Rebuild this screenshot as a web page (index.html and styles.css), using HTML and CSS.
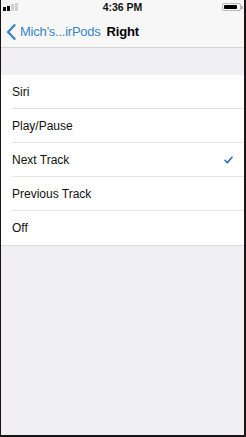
FILE: index.html
```html
<!DOCTYPE html>
<html>
<head>
<meta charset="utf-8">
<link rel="stylesheet" href="styles.css">
</head>
<body>
<div class="screen">
  <div class="status">
    <div class="signal">
      <span class="bar b1 on"></span><span class="bar b2 on"></span><span class="bar b3"></span><span class="bar b4"></span>
    </div>
    <div class="time">4:36 PM</div>
    <div class="battery"><span class="fill"></span><span class="nub"></span></div>
  </div>
  <div class="nav">
    <svg class="chev" width="10" height="16" viewBox="0 0 10 16"><path d="M8.5 1.2 L2 8 L8.5 14.8" fill="none" stroke="#3a86c4" stroke-width="2.3" stroke-linecap="round" stroke-linejoin="round"/></svg>
    <span class="back">Mich’s...irPods</span>
    <span class="title">Right</span>
  </div>
  <div class="gap"></div>
  <ul class="list">
    <li class="row"><span>Siri</span></li>
    <li class="row"><span>Play/Pause</span></li>
    <li class="row"><span>Next Track</span>
      <svg class="check" width="9" height="8" viewBox="0 0 9 8"><path d="M1 4.3 L3.3 6.6 L8 1.2" fill="none" stroke="#2f73b0" stroke-width="1.6" stroke-linecap="round" stroke-linejoin="round"/></svg>
    </li>
    <li class="row"><span>Previous Track</span></li>
    <li class="row last"><span>Off</span></li>
  </ul>
</div>
</body>
</html>
```
FILE: styles.css
```css
* { box-sizing: border-box; }
html, body { margin: 0; padding: 0; }
body { width: 246px; height: 437px; overflow: hidden; font-family: "Liberation Sans", Arial, sans-serif; }
.screen {
  width: 246px; height: 437px;
  background: #efeff4;
  border-left: 1px solid #1a1414;
  border-right: 2px solid #1a1414;
  border-bottom: 2px solid #1a1414;
  display: flex; flex-direction: column;
}
.status {
  height: 18px; background: #f7f7f8;
  display: flex; align-items: center; justify-content: space-between;
  padding: 0 3px 5px 2px;
  position: relative;
}
.signal { display: flex; align-items: flex-end; gap: 1px; height: 8px; }
.bar { width: 3px; background: #cfcfd4; display: block; }
.bar.on { background: #111; }
.b1 { height: 4px; } .b2 { height: 5px; } .b3 { height: 7px; } .b4 { height: 8px; }
.time { font-size: 10.5px; font-weight: bold; color: #111; position: absolute; left: 0; right: 0; text-align: center; top: 1px; }
.battery { width: 19px; height: 8px; border: 1px solid #b9b9bd; border-radius: 2px; padding: 1px; display: flex; position: relative; }
.fill { flex: 1; background: #000; border-radius: 1px; margin-right: 2px; }
.nub { position: absolute; right: -3px; top: 2px; width: 2px; height: 3px; background: #b9b9bd; }
.nav {
  height: 30px; background: #f7f7f8;
  border-bottom: 1px solid #d5d5d9;
  display: flex; align-items: center; padding: 0 0 2px 5px;
}
.chev { display: block; margin-right: 4px; }
.back { color: #3a86c4; font-size: 13px; letter-spacing: -0.25px; margin-right: 6px; }
.title { color: #000; font-size: 13px; font-weight: bold; letter-spacing: -0.2px; }
.gap { height: 27px; }
.list { list-style: none; margin: 0; padding: 0 0 0 11px; background: #fff; border-bottom: 1px solid #dcdce0; }
.row {
  height: 34px; display: flex; align-items: center; justify-content: space-between;
  border-bottom: 1px solid #e4e4e8; padding-right: 11px;
  font-size: 12px; color: #111;
}
.row.last { border-bottom: none; }
.check { display: block; }
```
